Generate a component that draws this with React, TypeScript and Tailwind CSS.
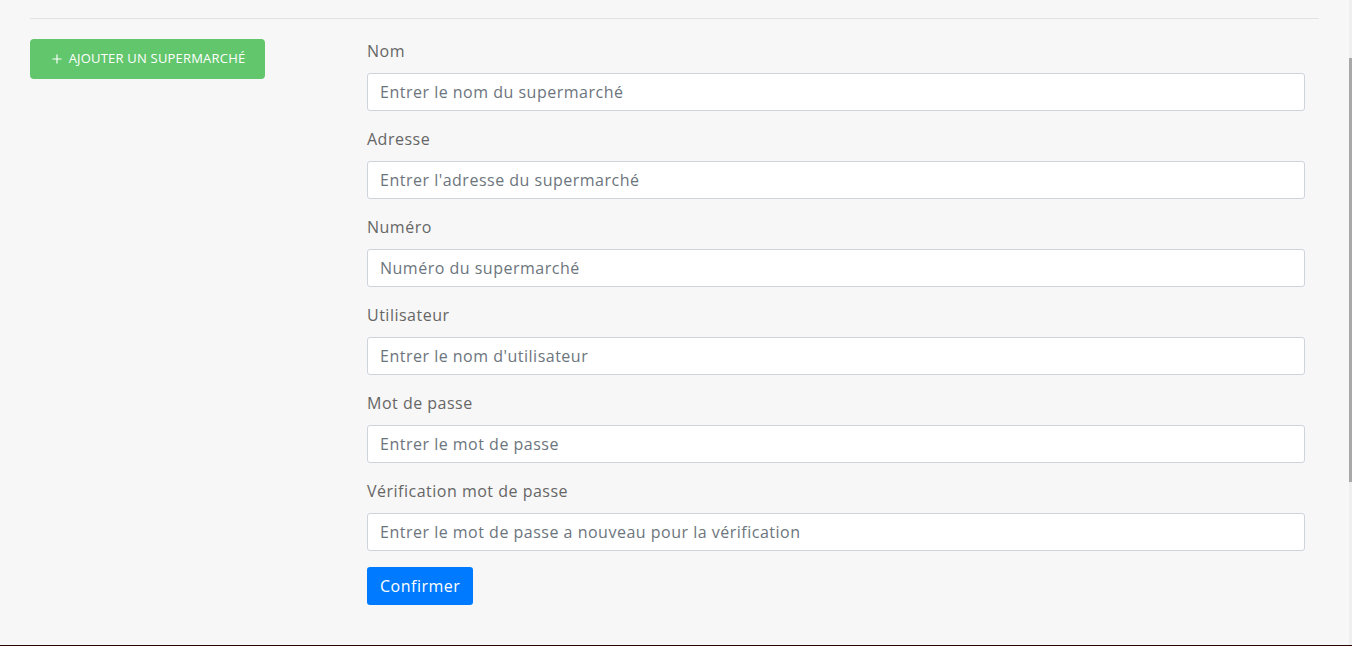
import { Plus } from 'lucide-react';

const fields = [
  { label: 'Nom', placeholder: 'Entrer le nom du supermarché', type: 'text' },
  { label: 'Adresse', placeholder: "Entrer l'adresse du supermarché", type: 'text' },
  { label: 'Numéro', placeholder: 'Numéro du supermarché', type: 'text' },
  { label: 'Utilisateur', placeholder: "Entrer le nom d'utilisateur", type: 'text' },
  { label: 'Mot de passe', placeholder: 'Entrer le mot de passe', type: 'password' },
  {
    label: 'Vérification mot de passe',
    placeholder: 'Entrer le mot de passe a nouveau pour la vérification',
    type: 'password',
  },
];

export default function App() {
  return (
    <div className="h-[646px] bg-[#f7f7f7] font-['Open_Sans',sans-serif] flex flex-col overflow-hidden">
      <div className="flex flex-1">
        <div className="flex-1 pl-[30px] pr-[30px]">
          <div className="mt-[18px] border-t border-[#e3e3e3]" />

          <div className="flex mt-[20px]">
            {/* Left column */}
            <div className="w-[337px] shrink-0">
              <button className="flex items-center gap-[5px] h-[40px] w-[235px] justify-center rounded bg-[#62c66c] text-white text-[13px] font-medium uppercase tracking-[0.2px]">
                <Plus size={14} strokeWidth={2} /> Ajouter un supermarché
              </button>
            </div>

            {/* Form */}
            <form className="w-[938px] flex flex-col">
              {fields.map((f) => (
                <div key={f.label} className="mb-[16px]">
                  <label className="block h-[24px] leading-[24px] text-[16px] tracking-[0.5px] text-[#666] mb-[10px]">
                    {f.label}
                  </label>
                  <input
                    type={f.type}
                    placeholder={f.placeholder}
                    className="w-full h-[38px] bg-white border border-[#ced4da] rounded-[3px] px-[12px] text-[16px] tracking-[0.5px] text-[#495057] placeholder:text-[#6c757d] outline-none"
                  />
                </div>
              ))}
              <div>
                <button
                  type="button"
                  className="h-[38px] px-[13px] rounded-[3px] bg-[#007bff] text-white text-[16px] tracking-[0.5px]"
                >
                  Confirmer
                </button>
              </div>
            </form>
          </div>
        </div>

        {/* thin scrollbar */}
        <div className="w-[3px] bg-[#efefef] flex flex-col">
          <div className="h-[58px]" />
          <div className="h-[424px] bg-[#a8a8a8]" />
        </div>
      </div>
      <div className="h-[1px] bg-[#2a0505]" />
    </div>
  );
}
